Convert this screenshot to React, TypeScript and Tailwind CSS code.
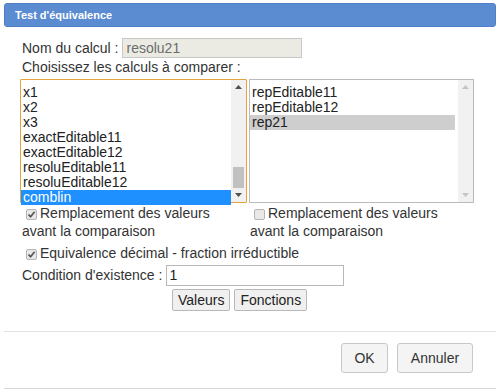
import React from "react";

function Check({ checked }: { checked: boolean }) {
  return (
    <span className="inline-flex h-[11px] w-[11px] shrink-0 items-center justify-center rounded-[2px] border border-[#b5b5b5] bg-[#e8e8e8] mr-[3px] relative top-[1px]">
      {checked && (
        <svg width="9" height="9" viewBox="0 0 9 9">
          <path d="M1.5 4.6 L3.6 6.7 L7.6 1.8" stroke="#555" strokeWidth="1.7" fill="none" />
        </svg>
      )}
    </span>
  );
}

function Scrollbar({ light, thumb }: { light?: boolean; thumb?: boolean }) {
  const c = light ? "#c4c4c4" : "#505050";
  return (
    <div className="flex w-[15px] flex-col items-center justify-between bg-[#f1f1f1] py-[5px] relative">
      <svg width="7" height="4" viewBox="0 0 7 4"><path d="M0 4 L3.5 0 L7 4Z" fill={c} /></svg>
      {thumb && <div className="absolute left-[2px] top-[87px] h-[21px] w-[11px] bg-[#c1c1c1]" />}
      <svg width="7" height="4" viewBox="0 0 7 4"><path d="M0 0 L3.5 4 L7 0Z" fill={c} /></svg>
    </div>
  );
}

export default function App() {
  const left = ["x1", "x2", "x3", "exactEditable11", "exactEditable12", "resoluEditable11", "resoluEditable12", "comblin"];
  const right = ["repEditable11", "repEditable12", "rep21"];
  return (
    <div className="h-[391px] w-[500px] bg-white font-['Liberation_Sans',Arial,sans-serif] text-[14px] text-[#333] relative overflow-hidden">
      <div className="mx-[4px] mt-[3px] flex h-[24px] items-center rounded-[3px] border border-[#4f7fc7] bg-[#5b8bd1] pl-[10px] text-[11px] font-bold text-white">
        Test d'équivalence
      </div>
      <div className="pl-[22px] pt-[11px] leading-[17px]">
        <div className="flex items-center">
          <span>Nom du calcul :</span>
          <div className="ml-[4px] h-[20px] w-[180px] border border-[#c8c8c8] bg-[#ebebe4] pl-[3px] text-[#6d6d6d] leading-[18px]">resolu21</div>
        </div>
        <div className="mt-[1px]">Choisissez les calculs à comparer :</div>
        <div className="mt-[3px] ml-[-2px] flex gap-[2px]">
          <div className="flex h-[124px] w-[227px] border border-[#e4a33e] rounded-[1px]">
            <div className="flex-1 leading-[15px] pt-[5px]">
              {left.map((t, i) => (
                <div key={t} className={i === left.length - 1 ? "bg-[#1e90ff] text-white pl-[2px]" : "pl-[2px] text-[#222]"}>
                  {t}
                </div>
              ))}
            </div>
            <Scrollbar thumb />
          </div>
          <div className="flex h-[124px] w-[225px] border border-[#bbbbbb]">
            <div className="flex-1 leading-[15px] pt-[5px] pr-[3px]">
              {right.map((t, i) => (
                <div key={t} className={i === 2 ? "bg-[#cecece] pl-[2px] text-[#222]" : "pl-[2px] text-[#222]"}>
                  {t}
                </div>
              ))}
            </div>
            <Scrollbar light />
          </div>
        </div>
        <div className="mt-[1px] flex leading-[18px]">
          <div className="w-[228px]">
            <div className="flex items-center pl-[4px]"><Check checked />Remplacement des valeurs</div>
            <div>avant la comparaison</div>
          </div>
          <div>
            <div className="flex items-center pl-[4px]"><Check checked={false} />Remplacement des valeurs</div>
            <div>avant la comparaison</div>
          </div>
        </div>
        <div className="mt-[5px] flex items-center pl-[4px]"><Check checked />Equivalence décimal - fraction irréductible</div>
        <div className="mt-[3px] flex items-center">
          <span>Condition d'existence :</span>
          <div className="ml-[4px] h-[21px] w-[178px] border border-[#b8b8b8] bg-white pl-[2px] leading-[19px] text-[#222]">1</div>
        </div>
        <div className="mt-[3px] flex gap-[4px] pl-[150px]">
          <button className="h-[22px] rounded-[2px] border border-[#b8b8b8] bg-[#f0f0f0] px-[5px] text-[#222] leading-[20px]">Valeurs</button>
          <button className="h-[22px] rounded-[2px] border border-[#b8b8b8] bg-[#f0f0f0] px-[5px] text-[#222] leading-[20px]">Fonctions</button>
        </div>
      </div>
      <div className="mx-[4px] mt-[20px] border-t border-[#e3e3e3]" />
      <div className="flex justify-end gap-[9px] pr-[27px] pt-[11px]">
        <button className="h-[30px] w-[47px] rounded-[3px] border border-[#c8c8c8] bg-[#f4f4f4] text-[#333]">OK</button>
        <button className="h-[30px] w-[76px] rounded-[3px] border border-[#c8c8c8] bg-[#f4f4f4] text-[#333]">Annuler</button>
      </div>
      <div className="absolute bottom-[2px] left-[4px] right-[4px] border-t border-[#d6d6d6]" />
    </div>
  );
}
